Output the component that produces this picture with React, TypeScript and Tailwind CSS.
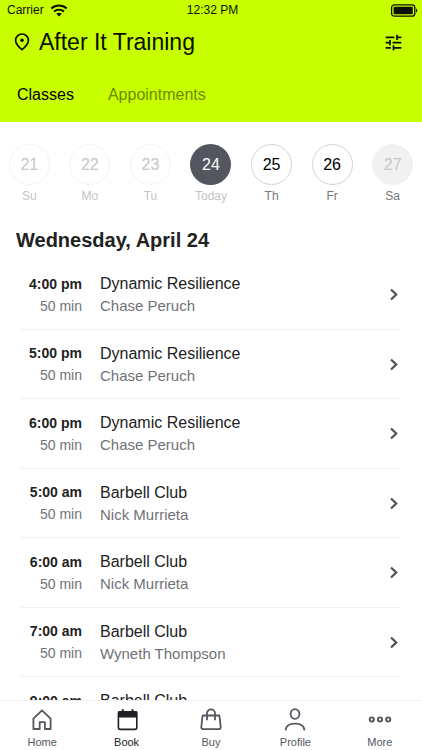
import React from "react";
import { MdTune } from "react-icons/md";

const days = [
  { num: 21, label: "Su", circle: "border border-[#f3f3f3] text-[#c6c6c6]", text: "text-[#c4c4c6]" },
  { num: 22, label: "Mo", circle: "border border-[#f3f3f3] text-[#c6c6c6]", text: "text-[#c4c4c6]" },
  { num: 23, label: "Tu", circle: "border border-[#f3f3f3] text-[#c6c6c6]", text: "text-[#c4c4c6]" },
  { num: 24, label: "Today", circle: "bg-[#53555f] text-white", text: "text-[#c4c4c6]" },
  { num: 25, label: "Th", circle: "border border-[#d4d4d4] text-black", text: "text-[#77777b]" },
  { num: 26, label: "Fr", circle: "border border-[#d4d4d4] text-black", text: "text-[#77777b]" },
  { num: 27, label: "Sa", circle: "bg-[#f1f1f1] text-[#c6c6c6]", text: "text-[#77777b]" },
];

const classes = [
  { time: "4:00 pm", name: "Dynamic Resilience", coach: "Chase Peruch" },
  { time: "5:00 pm", name: "Dynamic Resilience", coach: "Chase Peruch" },
  { time: "6:00 pm", name: "Dynamic Resilience", coach: "Chase Peruch" },
  { time: "5:00 am", name: "Barbell Club", coach: "Nick Murrieta" },
  { time: "6:00 am", name: "Barbell Club", coach: "Nick Murrieta" },
  { time: "7:00 am", name: "Barbell Club", coach: "Wyneth Thompson" },
  { time: "9:00 am", name: "Barbell Club", coach: "Wyneth Thompson" },
];

function StatusBar() {
  return (
    <div className="grid h-5 grid-cols-3 items-center pl-[7px] pr-1 text-xs">
      <div className="flex items-center gap-1.5">
        <span>Carrier</span>
        <svg width="18" height="13" viewBox="0 0 18 13" fill="none" stroke="currentColor" strokeWidth="2">
          <path d="M1.3 4.6C5.7.6 12.3.6 16.7 4.6" />
          <path d="M4 7.6c2.9-2.6 7.1-2.6 10 0" />
          <path d="M9 12.4 6.3 9.8c1.6-1.4 3.8-1.4 5.4 0z" fill="currentColor" stroke="none" />
        </svg>
      </div>
      <span className="text-center">12:32 PM</span>
      <svg className="justify-self-end" width="28" height="13" viewBox="0 0 28 13">
        <rect x="1.6" y="0.8" width="23.2" height="11.4" rx="2.8" fill="none" stroke="currentColor" strokeWidth="1.3" />
        <rect x="3.6" y="2.8" width="19.2" height="7.4" rx="1" fill="currentColor" />
        <path d="M26 4.5c1.7.6 1.7 3.4 0 4z" fill="currentColor" />
      </svg>
    </div>
  );
}

function Header() {
  return (
    <header className="shrink-0 bg-[#c8ff00] text-[#0b1000]">
      <StatusBar />
      <div className="flex h-11 items-center justify-between pl-[14px] pr-[18px]">
        <div className="flex items-center gap-2">
          <svg width="17" height="19" viewBox="0 0 17 19" fill="none" stroke="currentColor" strokeWidth="1.7">
            <path d="M8 16.6C5 14.2 1.6 10.7 1.6 7.2a6.4 6.2 0 0 1 12.8 0c0 3.500-3.400 7-6.400 9.400z" strokeLinejoin="round" />
            <circle cx="8" cy="7.2" r="1.8" fill="currentColor" stroke="none" />
          </svg>
          <h1 className="text-[23px] leading-7">After It Training</h1>
        </div>
        <button type="button" aria-label="Filters">
          <MdTune size={21} />
        </button>
      </div>
      <div className="flex h-[58px] items-center gap-[34px] px-[17px] pt-1">
        <button type="button" className="text-base text-black">Classes</button>
        <button type="button" className="text-base text-[#6d8a00]">Appointments</button>
      </div>
    </header>
  );
}

function Week() {
  return (
    <div className="-mx-px grid grid-cols-7 pt-[22px]">
      {days.map((day) => (
        <button type="button" key={day.num} className="flex flex-col items-center gap-[3px]">
          <span className={"flex size-[41px] items-center justify-center rounded-full text-base " + day.circle}>
            {day.num}
          </span>
          <span className={"text-xs leading-4 " + day.text}>{day.label}</span>
        </button>
      ))}
    </div>
  );
}

function ClassRow({ time, name, coach }: { time: string; name: string; coach: string }) {
  return (
    <li className="flex h-[70px] border-b border-[#f1f1f1] even:h-[69px]">
      <a href="#" className="flex flex-1 items-center pr-px">
        <div className="w-[61px] text-right">
          <p className="text-sm leading-[22px] font-bold text-[#222]">{time}</p>
          <p className="text-sm leading-[22px] text-[#717278]">50 min</p>
        </div>
        <div className="ml-[18px] flex-1">
          <p className="text-base leading-[22px] text-[#222]">{name}</p>
          <p className="text-[15px] leading-[21px] text-[#717278]">{coach}</p>
        </div>
        <svg width="10" height="13" viewBox="0 0 10 13" fill="none" stroke="#505055" strokeWidth="2.2">
          <path d="M2 1.5 7.2 6.5 2 11.5" />
        </svg>
      </a>
    </li>
  );
}

function HomeIcon() {
  return (
    <svg width="24" height="24" viewBox="0 0 24 24" fill="none" stroke="currentColor" strokeWidth="1.8" strokeLinejoin="round">
      <path d="M3.400 10.600 12 2.300l8.600 8.300v10.400h-5.700v-6.800H9.700V21H3.400z" />
    </svg>
  );
}

function BookIcon() {
  return (
    <svg width="24" height="24" viewBox="0 0 24 24" fill="none" stroke="currentColor" strokeWidth="1.6">
      <rect x="3.4" y="3.8" width="18.4" height="17.6" rx="1.8" />
      <path d="M3.800 4h17.600v4.600H3.800z" fill="currentColor" />
      <path d="M7.700 1.200v4M17.500 1.200v4" strokeWidth="2" />
    </svg>
  );
}

function BuyIcon() {
  return (
    <svg width="24" height="24" viewBox="0 0 24 24" fill="none" stroke="currentColor" strokeWidth="1.8">
      <path d="M4.300 7.500h15.400c.4 0 .7.2.8.6l1.200 10.900c.1 1.300-.7 2.200-2 2.200H4.300c-1.300 0-2.100-.9-2-2.200L3.500 8.100c.1-.4.4-.6.8-.6z" />
      <path d="M8 12.300V5.400C8 3.200 9.700 1.400 12 1.400s4 1.800 4 4v6.900" />
    </svg>
  );
}

function ProfileIcon() {
  return (
    <svg width="24" height="24" viewBox="0 0 24 24" fill="none" stroke="currentColor" strokeWidth="1.8">
      <ellipse cx="12" cy="6" rx="4.4" ry="4.8" />
      <path d="M2.500 22.400c.3-4.700 3.700-6.800 9.500-6.800s9.200 2.100 9.500 6.800" />
    </svg>
  );
}

function MoreIcon() {
  return (
    <svg width="24" height="24" viewBox="0 0 24 24" fill="none" stroke="currentColor" strokeWidth="1.9">
      <circle cx="3.8" cy="11.5" r="2.1" />
      <circle cx="12" cy="11.5" r="2.1" />
      <circle cx="20.2" cy="11.5" r="2.1" />
    </svg>
  );
}

const tabs = [
  { label: "Home", Icon: HomeIcon },
  { label: "Book", Icon: BookIcon, active: true },
  { label: "Buy", Icon: BuyIcon },
  { label: "Profile", Icon: ProfileIcon },
  { label: "More", Icon: MoreIcon },
];

function App() {
  return (
    <div className="flex h-screen flex-col bg-white font-['Liberation_Sans',Arial,sans-serif]">
      <Header />
      <main className="min-h-0 flex-1 overflow-hidden">
        <Week />
        <h2 className="mt-[22px] px-4 text-xl leading-7 font-bold text-[#222]">Wednesday, April 24</h2>
        <ul className="mt-1.5 pl-[21px] pr-[22px]">
          {classes.map((item) => (
            <ClassRow key={item.time} {...item} />
          ))}
        </ul>
      </main>
      <nav className="grid shrink-0 grid-cols-5 border-t border-[#f1f1f1] bg-white pt-[7px] pb-px">
        {tabs.map(({ label, Icon, active }) => (
          <a
            key={label}
            href="#"
            className={"flex flex-col items-center gap-[3px] " + (active ? "text-[#202126]" : "text-[#54565e]")}
          >
            <Icon />
            <span className="text-[11px] leading-[14px]">{label}</span>
          </a>
        ))}
      </nav>
    </div>
  );
}

export default App;
